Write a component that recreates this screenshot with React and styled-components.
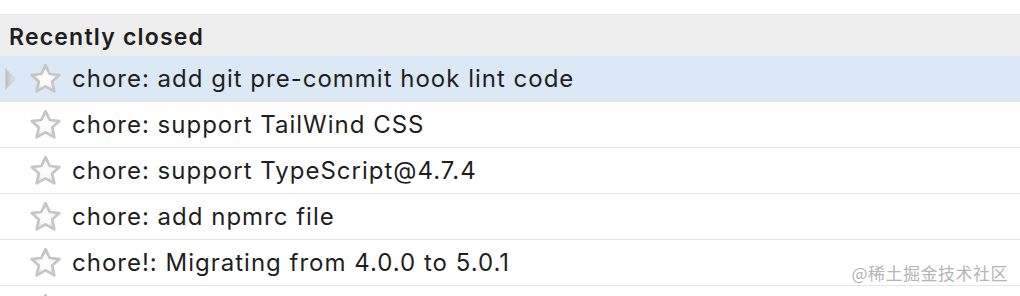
import React from 'react';
import styled, { createGlobalStyle } from 'styled-components';

const GlobalStyle = createGlobalStyle`
  html, body {
    margin: 0;
    padding: 0;
    background: #ffffff;
    overflow: hidden;
  }
  body {
    font-family: Inter, "Liberation Sans", "Noto Sans CJK SC", sans-serif;
  }
`;

// last row is only partly visible at the bottom edge
const items = [
  'chore: add git pre-commit hook lint code',
  'chore: support TailWind CSS',
  'chore: support TypeScript@4.7.4',
  'chore: add npmrc file',
  'chore!: Migrating from 4.0.0 to 5.0.1',
  '',
];

const Page = styled.div`
  position: relative;
  width: 1020px;
  height: 296px;
  padding-top: 14px;
  box-sizing: border-box;
  overflow: hidden;
`;

const Header = styled.div`
  height: 42px;
  display: flex;
  align-items: center;
  padding: 2px 0 0 9px;
  background: #eeeeee;
  border-top: 1px solid #e4e4e4;
  box-sizing: border-box;
  font-size: 23px;
  font-weight: 600;
  letter-spacing: 1.2px;
  color: #1e1e1e;
`;

const List = styled.ul`
  list-style: none;
  margin: 0;
  padding: 0;
`;

const Row = styled.li`
  height: 46px;
  display: flex;
  align-items: center;
  box-sizing: border-box;
  border-bottom: 1px solid #e6e6e6;
  background: ${({ $active }) => ($active ? '#dbe9f7' : '#ffffff')};
`;

const Arrow = styled.span`
  width: 29px;
  display: flex;
  padding-left: 4px;
  box-sizing: border-box;
  visibility: ${({ $show }) => ($show ? 'visible' : 'hidden')};
`;

const StarBox = styled.span`
  width: 43px;
  display: flex;
  align-items: center;
`;

const Title = styled.span`
  font-size: 24px;
  letter-spacing: 1px;
  color: #1f1f1f;
  white-space: nowrap;
`;

const Watermark = styled.div`
  position: absolute;
  right: 12px;
  bottom: 11px;
  font-size: 17px;
  color: #b5b5b5;
  font-family: "Noto Sans CJK SC", "Liberation Sans", sans-serif;
  letter-spacing: 0.5px;
`;

const TriangleIcon = () => (
  <svg width="12" height="24" viewBox="0 0 12 24">
    <defs>
      <linearGradient id="tri" x1="0" y1="0" x2="1" y2="0">
        <stop offset="0" stopColor="#bdbdbd" />
        <stop offset="1" stopColor="#e6e6e6" />
      </linearGradient>
    </defs>
    <path d="M1.5 1.5 L11 12 L1.5 22.5 Z" fill="url(#tri)" stroke="#d0d0d0" strokeWidth="1" strokeLinejoin="round" />
  </svg>
);

const StarIcon = () => (
  <svg width="33" height="31" viewBox="0 0 32 30">
    <defs>
      <radialGradient id="starFill" cx="0.5" cy="0.52" r="0.55">
        <stop offset="0" stopColor="#ffffff" />
        <stop offset="0.5" stopColor="#f8f8f8" />
        <stop offset="1" stopColor="#d2d2d2" />
      </radialGradient>
    </defs>
    <path
      d="M16 2 L20.1 10.6 L29.5 11.6 L22.5 18 L24.6 27.5 L16 22.7 L7.4 27.5 L9.5 18 L2.5 11.6 L11.9 10.6 Z"
      fill="url(#starFill)"
      stroke="#c6c6c6"
      strokeWidth="2.6"
      strokeLinejoin="round"
    />
  </svg>
);

export default function App() {
  return (
    <>
      <GlobalStyle />
      <Page>
        <Header>Recently closed</Header>
        <List>
          {items.map((text, i) => (
            <Row key={i} $active={i === 0}>
              <Arrow $show={i === 0}>
                <TriangleIcon />
              </Arrow>
              <StarBox>
                <StarIcon />
              </StarBox>
              <Title>{text}</Title>
            </Row>
          ))}
        </List>
        <Watermark>@稀土掘金技术社区</Watermark>
      </Page>
    </>
  );
}
